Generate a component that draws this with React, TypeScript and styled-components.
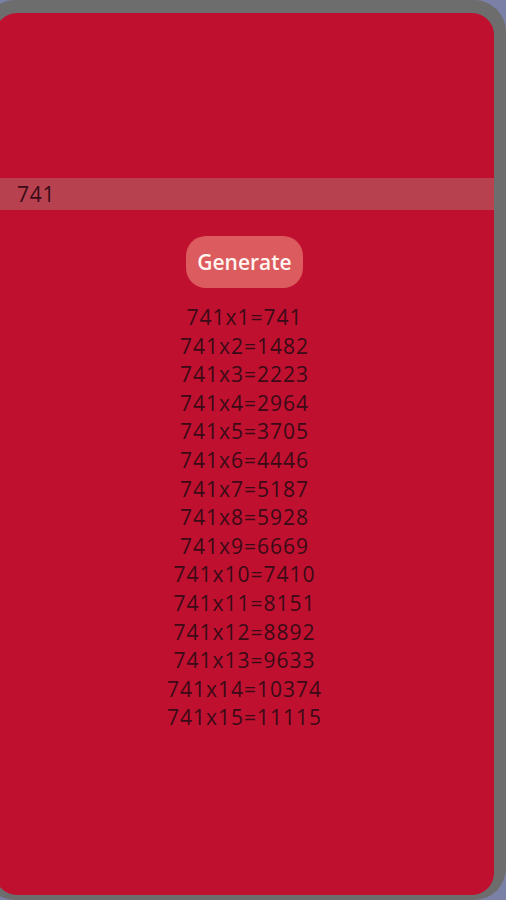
import { useState } from "react";
import styled, { createGlobalStyle } from "styled-components";

const GlobalStyle = createGlobalStyle`
  body {
    margin: 0;
    background-color: #7b81a6;
    font-family: "Open Sans", "Noto Sans", sans-serif;
    overflow: hidden;
  }
`;

const Frame = styled.div`
  box-sizing: border-box;
  width: 523px;
  height: 900px;
  margin-left: -17px;
  padding: 13px 12px 5px 12px;
  background-color: #6d6d6d;
  border-radius: 32px;
  display: flex;
`;

const Card = styled.div`
  flex: 1;
  display: flex;
  flex-direction: column;
  align-items: center;
  padding-top: 165px;
  background-color: #c0102f;
  border-radius: 22px;
`;

const NumberInput = styled.input`
  box-sizing: border-box;
  align-self: stretch;
  height: 32px;
  padding: 0 0 0 22px;
  border: none;
  outline: none;
  background-color: #b8414f;
  color: #3a0a16;
  font-family: inherit;
  font-size: 21px;
  letter-spacing: 0.8px;
`;

const GenerateButton = styled.button`
  margin-top: 26px;
  width: 117px;
  height: 52px;
  border: none;
  border-radius: 20px;
  background-color: #dc5b5f;
  color: #fff4f0;
  font-family: inherit;
  font-size: 21px;
  font-weight: 600;
  cursor: pointer;
`;

const Table = styled.ul`
  list-style-type: none;
  margin: 15px 0 0 0;
  padding: 0;
  text-align: center;
`;

const Row = styled.li`
  font-size: 21px;
  line-height: 28.6px;
  letter-spacing: 1px;
  color: #3a0a16;
`;

const App = () => {
  const [value, setValue] = useState("741");
  const [num, setNum] = useState(741);

  return (
    <>
      <GlobalStyle />
      <Frame>
        <Card>
          <NumberInput value={value} onChange={(e) => setValue(e.target.value)} />
          <GenerateButton onClick={() => setNum(Number(value) || 0)}>Generate</GenerateButton>
          <Table>
            {Array.from({ length: 15 }, (_, i) => (
              <Row key={i}>
                {num}x{i + 1}={num * (i + 1)}
              </Row>
            ))}
          </Table>
        </Card>
      </Frame>
    </>
  );
};

export default App;
